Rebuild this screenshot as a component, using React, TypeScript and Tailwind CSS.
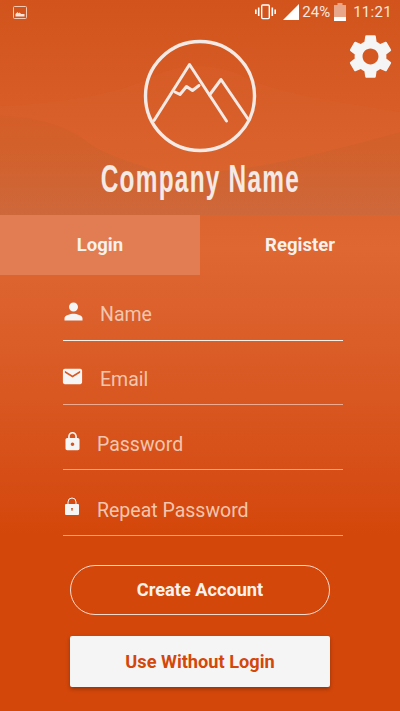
import React from 'react';
import { MdEmail, MdLock, MdPerson, MdSettings } from 'react-icons/md';

function LockOpenIcon() {
  return (
    <svg width="14" height="18" viewBox="0 0 14 18" fill="none">
      <path d="M3 8V5a4 4 0 0 1 8 0v3" stroke="#f5f5f5" strokeWidth="1" />
      <rect x="0" y="7" width="14" height="11" rx="1" fill="#f5f5f5" />
      <path d="M6 11h2v1.4l-.5.4V14h-1v-1.2l-.5-.4z" fill="#d96a3a" />
    </svg>
  );
}

function Logo() {
  return (
    <svg width="114" height="114" viewBox="143 39.5 114 114" fill="none" stroke="#f4e9e4" strokeWidth="3" strokeLinecap="round" strokeLinejoin="round">
      <circle cx="200" cy="96.5" r="54.5" strokeWidth="3.4" />
      <path d="M154 121 L189.5 65 L226.5 121.5" />
      <path d="M209.5 95.5 L221 80 L248 119.5" />
      <path d="M175 92.5 L180 95 L186.5 87 L192.5 91 L199 86" />
    </svg>
  );
}

function StatusBar() {
  return (
    <div className="flex h-6 items-center pl-[13px] pr-2 text-[15px] text-[#f7e6dd]">
      <svg width="14" height="13" viewBox="0 0 14 13">
        <rect x="0.5" y="0.5" width="13" height="12" rx="1" fill="none" stroke="#f2c9b3" />
        <path d="M2.5 10.5V8l2-2 1 1.2 1-.6 1.6 1.4h3.4v2.5z" fill="#f7e6dd" />
      </svg>
      <svg className="ml-auto" width="21" height="16" viewBox="0 0 21 16" fill="none" stroke="#fff" strokeWidth="1.4">
        <rect x="6.7" y="1" width="7.6" height="13.6" rx="1" />
        <path d="M3.7 3.5v8.5M17.3 3.5v8.5M0.8 5.5v4.5M20.2 5.5v4.5" strokeWidth="1.6" />
      </svg>
      <svg className="ml-[7px]" width="16" height="16" viewBox="0 0 16 16">
        <path d="M16 0v16H0z" fill="#fff" />
      </svg>
      <span className="ml-[3px]">24%</span>
      <svg className="ml-[4px]" width="12" height="18" viewBox="0 0 12 18">
        <path d="M3.5 0h5v2H12v16H0V2h3.5z" fill="#e8a78a" />
        <rect y="14" width="12" height="4" fill="#fff" />
      </svg>
      <span className="ml-[7px] tracking-[0.3px]">11:21</span>
    </div>
  );
}

function Field({ icon, label, rowClass, labelClass, iconClass }: { icon: React.ReactNode; label: string; rowClass: string; labelClass: string; iconClass: string }) {
  return (
    <div className={`flex items-center border-b ${rowClass}`}>
      <div className={`flex w-5 justify-center ${iconClass}`}>{icon}</div>
      <span className={`text-[19.5px] text-[#f2c6ae] ${labelClass}`}>{label}</span>
    </div>
  );
}

export default function App() {
  return (
    <div className="relative h-[711px] w-[400px] overflow-hidden bg-gradient-to-b from-[#d2541c] via-[#de6732] via-35% to-[#d4470a] to-75% font-['Roboto',sans-serif]">
      {/* hills behind the logo */}
      <svg className="absolute left-0 top-0" width="400" height="215" viewBox="0 0 400 215">
        <defs>
          <linearGradient id="hill" x1="0" y1="115" x2="0" y2="215" gradientUnits="userSpaceOnUse">
            <stop offset="0" stopColor="#b8561f" stopOpacity="0.12" />
            <stop offset="1" stopColor="#bc6c48" stopOpacity="0.45" />
          </linearGradient>
        </defs>
        <path d="M0 106C60 103 115 95 150 78C180 62 220 62 250 80C290 96 340 102 400 112V215H0z" fill="#e07a45" fillOpacity="0.1" />
        <path d="M0 115C30 117 60 122 85 140C100 153 125 160 160 172C220 178 300 160 400 132V215H0z" fill="url(#hill)" />
      </svg>
      <div className="relative">
        <StatusBar />
        <MdSettings className="absolute right-[3px] top-[30px]" size={53} color="#f5f5f5" />
        <div className="flex h-[191px] flex-col items-center pt-[15px]">
          <Logo />
          <span className="mt-[4px] origin-center scale-x-[0.625] whitespace-nowrap font-['Liberation_Sans',sans-serif] text-[39px] font-bold leading-[44px] tracking-[2px] text-[#f4e9e4]">Company Name</span>
        </div>
        <div className="flex h-[60px] text-[18.5px] font-bold text-[#f8f1ec]">
          <div className="flex w-1/2 items-center justify-center bg-[#e27d53] pt-[2px]">Login</div>
          <div className="flex w-1/2 items-center justify-center pt-[2px]">Register</div>
        </div>
        <div className="ml-[63px] mt-[1px] flex w-[280px] flex-col">
          <Field icon={<MdPerson className="shrink-0" size={27} color="#f5f5f5" />} iconClass="translate-y-[3px]" label="Name" labelClass="translate-y-[7px]" rowClass="h-[65px] gap-[17px] border-white/90" />
          <Field icon={<MdEmail className="shrink-0" size={23} color="#f5f5f5" />} iconClass="translate-y-[4px] -translate-x-[1px]" label="Email" labelClass="translate-y-[7px]" rowClass="h-[64px] gap-[17px] border-white/50" />
          <Field icon={<MdLock className="shrink-0" size={21} color="#f5f5f5" />} iconClass="translate-y-[4px] -translate-x-[1px]" label="Password" labelClass="translate-y-[8px]" rowClass="h-[65px] gap-[14px] border-white/50" />
          <Field icon={<LockOpenIcon />} iconClass="translate-y-[3px] -translate-x-[1px]" label="Repeat Password" labelClass="translate-y-[8px]" rowClass="h-[66px] gap-[14px] border-white/50" />
        </div>
        <div className="mt-[29px] flex flex-col items-center gap-[21px]">
          <button className="h-[50px] w-[260px] rounded-full border border-white/80 text-[18.2px] font-bold text-[#f8f1ec]">Create Account</button>
          <button className="h-[51px] w-[260px] rounded-[2px] bg-[#f5f5f5] text-[18.2px] font-bold text-[#d4470a] shadow-[0_2px_4px_rgba(0,0,0,0.3)]">Use Without Login</button>
        </div>
      </div>
    </div>
  );
}
